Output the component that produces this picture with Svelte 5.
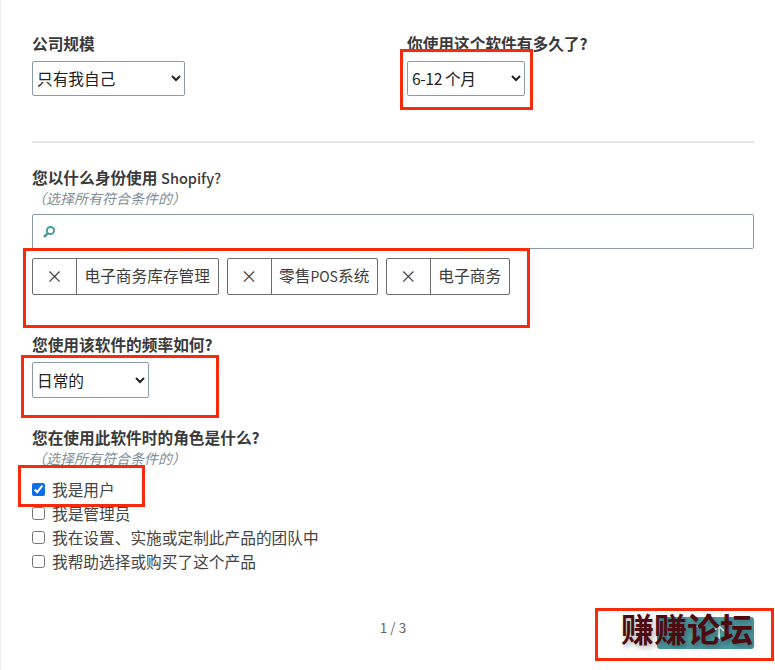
<script lang="ts">
	const tags = [
		{ before: '电子商务库存管理', latin: '', after: '' },
		{ before: '零售', latin: 'POS', after: '系统' },
		{ before: '电子商务', latin: '', after: '' }
	];
	const roles = [
		{ label: '我是用户', checked: true },
		{ label: '我是管理员', checked: false },
		{ label: '我在设置、实施或定制此产品的团队中', checked: false },
		{ label: '我帮助选择或购买了这个产品', checked: false }
	];
</script>

<div class="page">
	<div class="top">
		<div class="col-left">
			<label class="q" for="size">公司规模</label>
			<select id="size" class="w-size"><option>只有我自己</option></select>
		</div>
		<div>
			<label class="q" for="time">你使用这个软件有多久了?</label>
			<select id="time" class="w-time"><option>6-12 个月</option></select>
		</div>
	</div>

	<hr />

	<section class="capacity">
		<div class="q">您以什么身份使用 <span class="plain">Shopify?</span></div>
		<div class="hint">（选择所有符合条件的）</div>
		<div class="search">
			<svg width="16" height="16" viewBox="0 0 16 16" fill="none" stroke="#4a9aa0">
				<circle cx="9.5" cy="6.5" r="3.6" stroke-width="2" />
				<path d="M6.8 9.2 3 13" stroke-width="2.6" />
			</svg>
		</div>
		<div class="tags">
			{#each tags as tag}
				<div class="tag">
					<span class="x">×</span>
					<span class="tag-text">{tag.before}<span class="latin">{tag.latin}</span>{tag.after}</span>
				</div>
			{/each}
		</div>
	</section>

	<section class="freq">
		<label class="q" for="freq">您使用该软件的频率如何?</label>
		<select id="freq" class="w-freq"><option>日常的</option></select>
	</section>

	<section class="role">
		<div class="q">您在使用此软件时的角色是什么?</div>
		<div class="hint">（选择所有符合条件的）</div>
		<div class="checks">
			{#each roles as r}
				<label class="check">
					<input type="checkbox" checked={r.checked} />
					<span>{r.label}</span>
				</label>
			{/each}
		</div>
	</section>

	<footer>
		<span class="pages">1 / 3</span>
		<button class="next" aria-label="Next">
			<svg width="40" height="18" viewBox="0 0 40 18" fill="none" stroke="#fff" stroke-width="1.5">
				<path d="M3 3h9M7.500 3v13M28 8l5-5 5 5M33 3v13" />
			</svg>
		</button>
	</footer>

	<div class="mark box1"></div>
	<div class="mark box2"></div>
	<div class="mark box3"></div>
	<div class="mark box4"></div>
	<div class="mark box5"><span class="stamp">赚赚论坛</span></div>
</div>

<style>
	:global(body) {
		background: #fff;
	}

	.page {
		position: relative;
		box-sizing: border-box;
		width: 775px;
		height: 670px;
		padding: 31px 21px 0 31px;
		border-left: 1px solid #f0f0f0;
		overflow: hidden;
		font-family: "Noto Sans CJK SC", "Noto Sans", sans-serif;
		font-size: 15.7px;
		color: #3c3c3c;
	}

	.top {
		display: flex;
	}

	.col-left {
		width: 375px;
	}

	.q {
		display: block;
		height: 25px;
		line-height: 25px;
		font-size: 15.7px;
		font-weight: 700;
		color: #3a3a3a;
	}

	.plain {
		font-size: 14.5px;
		font-weight: 500;
	}

	.hint {
		height: 18px;
		line-height: 18px;
		font-size: 14px;
		font-style: italic;
		color: #7f8d97;
	}

	select {
		display: block;
		box-sizing: border-box;
		height: 35px;
		margin-top: 5px;
		padding: 0;
		border: 1px solid #8a9ba6;
		border-radius: 2px;
		background: #fff;
		font-family: inherit;
		font-size: 15.7px;
		color: #222;
	}

	.w-size {
		width: 153px;
	}

	.w-time {
		width: 118px;
		letter-spacing: -0.4px;
	}

	.w-freq {
		width: 117px;
		height: 36px;
	}

	hr {
		height: 2px;
		margin: 45px 0 0;
		border: 0;
		background: #e4e4e4;
	}

	.capacity {
		margin-top: 22px;
	}

	.capacity .hint,
	.role .hint {
		margin-top: -1px;
	}

	.search {
		box-sizing: border-box;
		display: flex;
		align-items: center;
		height: 35px;
		margin-top: 7px;
		padding-left: 8px;
		border: 1px solid #8a9ba6;
		border-radius: 2px;
	}

	.tags {
		display: flex;
		gap: 8px;
		margin-top: 9px;
	}

	.tag {
		display: flex;
		height: 37px;
		box-sizing: border-box;
		border: 1px solid #6c6c6c;
		border-radius: 2px;
		line-height: 33px;
	}

	.x {
		width: 43px;
		text-align: center;
		font-size: 17px;
		border-right: 1px solid #6c6c6c;
	}

	.tag-text {
		padding: 0 7.500px;
	}

	.latin {
		font-size: 14px;
	}

	.freq {
		margin-top: 37px;
	}

	.role {
		margin-top: 27px;
	}

	.checks {
		margin-top: 10px;
	}

	.check {
		display: flex;
		align-items: center;
		height: 24px;
		color: #444;
	}

	.check input {
		width: 13px;
		height: 13px;
		margin: 0 7px 0 0;
		accent-color: #0b6fe8;
	}

	footer {
		position: relative;
		display: flex;
		justify-content: center;
		align-items: center;
		margin-top: 37px;
		height: 34px;
	}

	.pages {
		font-size: 13.5px;
		color: #666;
	}

	.next {
		position: absolute;
		right: 0;
		top: 7px;
		width: 97px;
		height: 32px;
		padding: 0;
		border: 0;
		border-radius: 3px;
		background: #4a9aa0;
	}

	.mark {
		position: absolute;
		box-sizing: border-box;
		border: 3px solid #f72a0c;
	}

	.box1 {
		left: 399px;
		top: 49px;
		width: 133px;
		height: 61px;
	}

	.box2 {
		left: 22px;
		top: 248px;
		width: 507px;
		height: 80px;
	}

	.box3 {
		left: 20px;
		top: 355px;
		width: 198px;
		height: 63px;
	}

	.box4 {
		left: 17px;
		top: 465px;
		width: 127px;
		height: 42px;
	}

	.box5 {
		left: 594px;
		top: 608px;
		width: 179px;
		height: 53px;
	}

	.stamp {
		position: absolute;
		left: 23px;
		top: -3px;
		font-size: 33px;
		line-height: 40px;
		font-weight: 700;
		color: #4d0a10;
		white-space: nowrap;
		text-shadow: 2px 3px 5px rgba(0, 0, 0, 0.3);
	}
</style>
